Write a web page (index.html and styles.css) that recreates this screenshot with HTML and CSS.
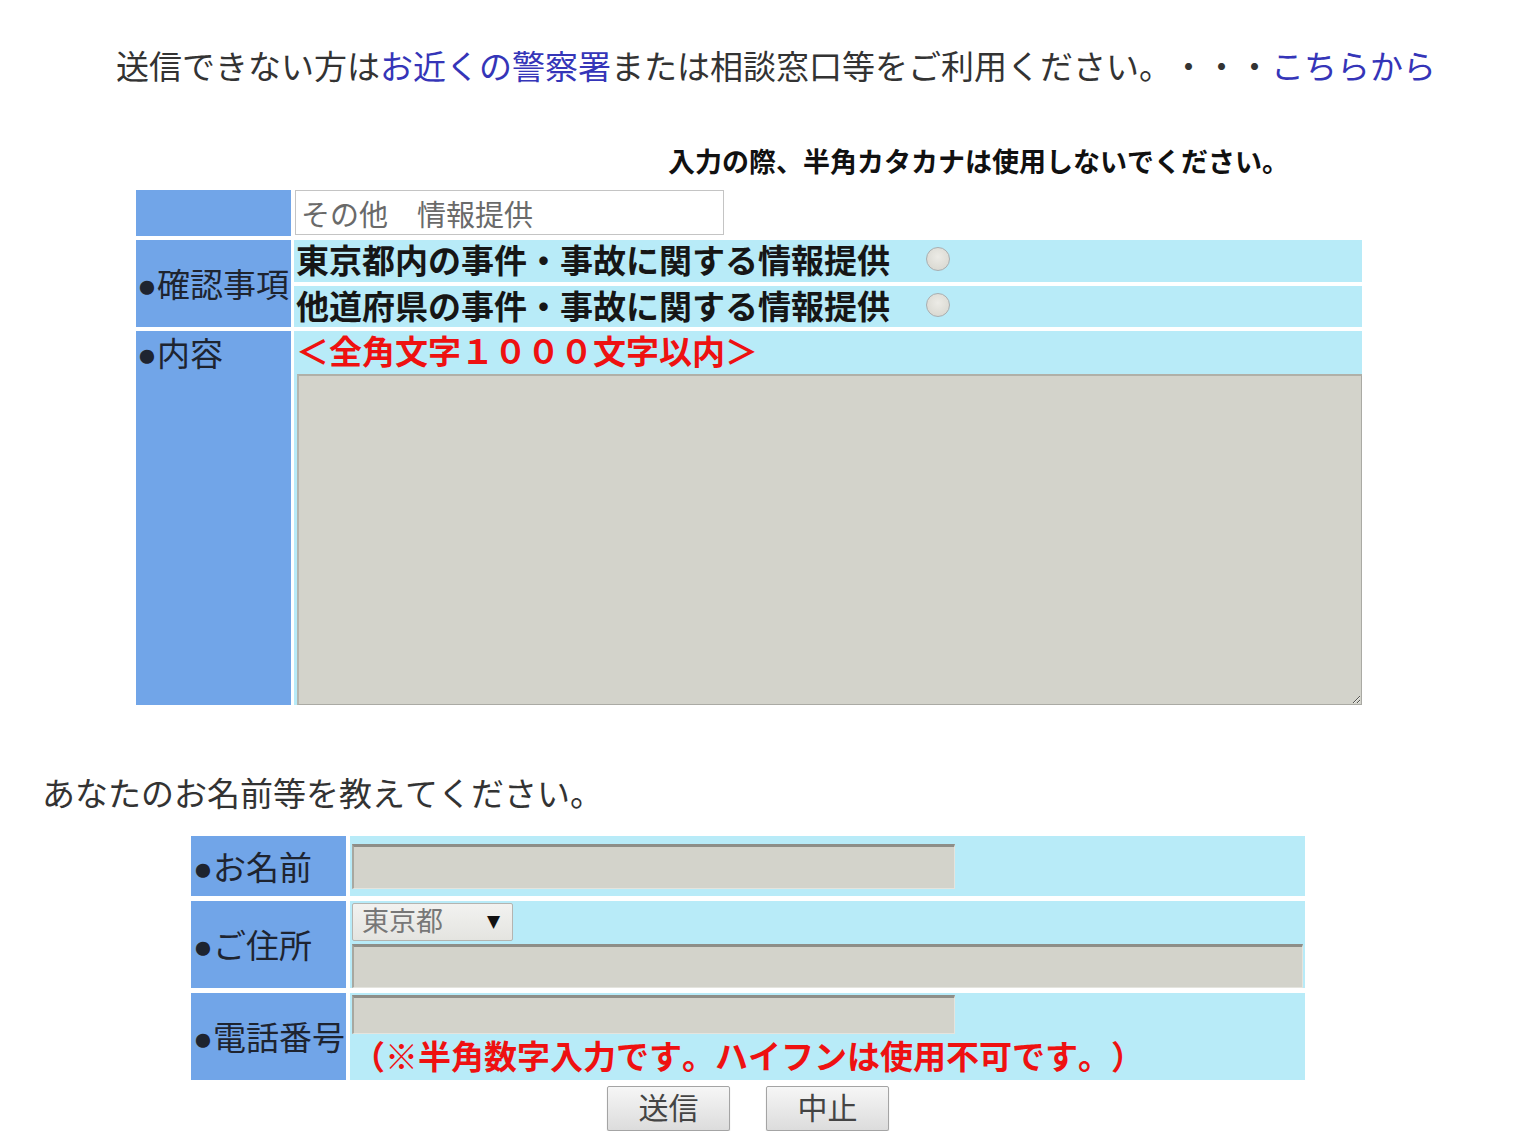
FILE: index.html
```html
<!DOCTYPE html>
<html lang="ja">
<head>
<meta charset="utf-8">
<title>情報提供</title>
<link rel="stylesheet" href="styles.css">
</head>
<body>
<p class="notice">送信できない方は<a class="link" href="#">お近くの警察署</a>または相談窓口等をご利用ください。・・・<a class="link" href="#">こちらから</a></p>
<p class="caution">入力の際、半角カタカナは使用しないでください。</p>

<div class="form-a">
  <div class="label"></div>
  <div class="cell-plain"><input class="subject" type="text" value="その他　情報提供" readonly></div>

  <div class="label label-span">●確認事項</div>
  <div class="cell choice">東京都内の事件・事故に関する情報提供<input class="radio" type="radio" name="area"></div>
  <div class="cell choice">他道府県の事件・事故に関する情報提供<input class="radio" type="radio" name="area"></div>

  <div class="label label-top">●内容</div>
  <div class="cell content">
    <div class="red-note">＜全角文字１０００文字以内＞</div>
    <textarea class="body-text"></textarea>
  </div>
</div>

<p class="ask">あなたのお名前等を教えてください。</p>

<div class="form-b">
  <div class="label">●お名前</div>
  <div class="cell name-cell"><input class="field short" type="text"></div>

  <div class="label">●ご住所</div>
  <div class="cell addr-cell">
    <div class="select">東京都<span class="arrow">▼</span></div>
    <input class="field long" type="text">
  </div>

  <div class="label">●電話番号</div>
  <div class="cell tel-cell">
    <input class="field short tel" type="text">
    <div class="red-note tel-note">（※半角数字入力です。ハイフンは使用不可です。）</div>
  </div>
</div>

<div class="buttons">
  <button class="btn" type="button">送信</button>
  <button class="btn" type="button">中止</button>
</div>
</body>
</html>
```

FILE: styles.css
```css
html, body {
  margin: 0;
  padding: 0;
  background: #ffffff;
}
body {
  font-family: "Liberation Sans", "Noto Sans CJK JP", sans-serif;
  color: #333333;
  width: 1532px;
  text-spacing-trim: space-all;
  font-kerning: none;
}
.notice {
  margin: 0;
  padding: 48px 0 0 116px;
  font-size: 33px;
  line-height: 40px;
  white-space: nowrap;
  color: #333333;
}
.link {
  color: #3535b8;
  text-decoration: none;
}
.caution {
  margin: 59px 0 0 668px;
  font-size: 27px;
  line-height: 32px;
  font-weight: bold;
  color: #111111;
  white-space: nowrap;
}
.form-a {
  margin: 11px 0 0 136px;
  display: grid;
  grid-template-columns: 155px 1068px;
  grid-template-rows: 46px 42px 41px 374px;
  column-gap: 3px;
  row-gap: 4px;
}
.label {
  background: #71a5e8;
  color: #1e2430;
  font-size: 33px;
  line-height: 40px;
  display: flex;
  align-items: center;
  padding-left: 1px;
  padding-top: 5px;
  box-sizing: border-box;
  white-space: nowrap;
  overflow: hidden;
}
.label-span {
  grid-row: span 2;
}
.label-top {
  align-items: flex-start;
  padding-top: 4px;
}
.cell-plain {
  background: #ffffff;
  display: flex;
  align-items: flex-start;
}
.subject {
  margin: 0 0 0 1px;
  width: 429px;
  height: 45px;
  box-sizing: border-box;
  border: 1px solid #c4c4c4;
  background: #ffffff;
  color: #6a6a6a;
  font-family: "Liberation Sans", "Noto Sans CJK JP", sans-serif;
  font-size: 29px;
  padding: 0 0 0 5px;
  outline: none;
}
.cell {
  background: #b8ebf8;
}
.choice {
  display: flex;
  align-items: center;
  font-size: 33px;
  font-weight: bold;
  color: #161616;
  padding-left: 2px;
  padding-bottom: 4px;
  box-sizing: border-box;
  white-space: nowrap;
}
.radio {
  appearance: none;
  -webkit-appearance: none;
  margin: 0 0 0 36px;
  width: 24px;
  height: 24px;
  border-radius: 50%;
  border: 1px solid #a9aeb0;
  background: radial-gradient(circle at 50% 40%, #ecebe6 0%, #dcdbd4 70%, #cfd0cc 100%);
  box-sizing: border-box;
}
.content {
  display: flex;
  flex-direction: column;
}
.red-note {
  color: #ee1111;
  font-weight: bold;
  font-size: 33px;
  line-height: 43px;
  white-space: nowrap;
  padding-left: 2px;
}
.content .red-note {
  padding-top: 1px;
  line-height: 42px;
}
.body-text {
  margin: 0 0 0 3px;
  width: 1065px;
  height: 331px;
  box-sizing: border-box;
  border: 1px solid #aaaaa4;
  border-top: 2px solid #b0b0a8;
  border-left: 2px solid #b6b6ae;
  background: #d3d3cb;
  resize: both;
  outline: none;
}
.ask {
  margin: 70px 0 0 42px;
  font-size: 33px;
  line-height: 40px;
  color: #333333;
}
.form-b {
  margin: 21px 0 0 191px;
  display: grid;
  grid-template-columns: 155px 955px;
  grid-template-rows: 60px 87px 87px;
  column-gap: 4px;
  row-gap: 5px;
}
.form-b .label {
  padding-left: 2px;
}
.name-cell {
  display: flex;
  align-items: center;
}
.field {
  margin: 0 0 0 2px;
  box-sizing: border-box;
  background: #d3d3cb;
  border: 1px solid #e4e4de;
  border-top: 3px solid #8e8e88;
  border-left: 2px solid #a8a8a0;
  outline: none;
  padding: 0;
  display: block;
}
.short {
  width: 603px;
  height: 45px;
}
.addr-cell {
  display: flex;
  flex-direction: column;
  padding-top: 2px;
}
.select {
  margin-left: 2px;
  width: 161px;
  height: 38px;
  box-sizing: border-box;
  border: 1px solid #b4b4b0;
  border-radius: 2px;
  background: linear-gradient(#f2f2f0, #e4e4e0);
  color: #777777;
  font-size: 27px;
  line-height: 34px;
  padding-left: 9px;
  display: flex;
  align-items: center;
  position: relative;
}
.arrow {
  position: absolute;
  right: 12px;
  top: 0;
  font-family: "DejaVu Sans", sans-serif;
  font-size: 17px;
  color: #111111;
  line-height: 34px;
}
.long {
  margin-top: 3px;
  width: 951px;
  height: 44px;
}
.tel-cell {
  display: flex;
  flex-direction: column;
  padding-top: 2px;
}
.tel {
  height: 41px;
}
.tel-note {
  line-height: 44px;
  padding-left: 2px;
  padding-top: 2px;
}
.buttons {
  margin: 6px 0 0 191px;
  width: 1114px;
  display: flex;
  justify-content: center;
  gap: 36px;
}
.btn {
  width: 123px;
  height: 45px;
  box-sizing: border-box;
  border: 1px solid #a4a4a4;
  border-radius: 2px;
  background: linear-gradient(#f6f6f6, #dcdcdc);
  box-shadow: 0 1px 1px rgba(0, 0, 0, 0.25);
  font-family: "Liberation Sans", "Noto Sans CJK JP", sans-serif;
  font-size: 30px;
  line-height: 40px;
  color: #444444;
  padding: 0;
}
```
